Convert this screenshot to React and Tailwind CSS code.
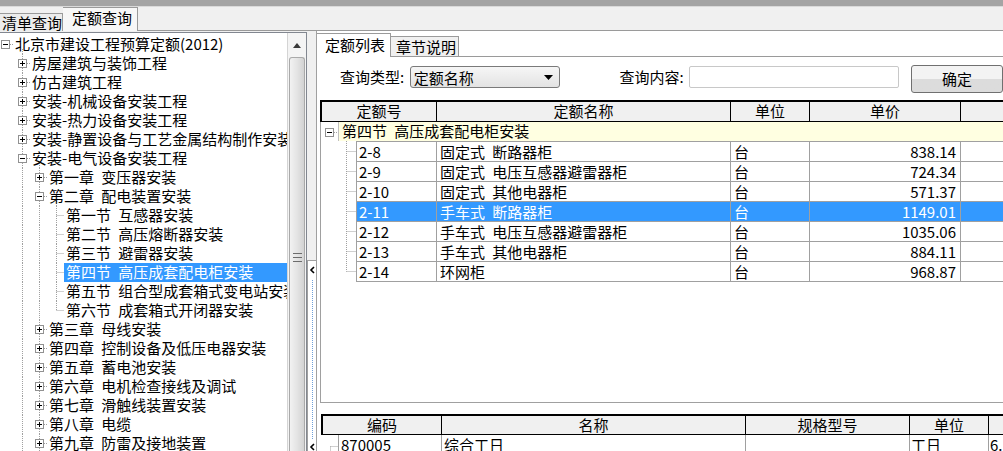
import React from 'react';

const dot = { stroke: '#a0a0a0', strokeWidth: 1, strokeDasharray: '1 1' };

const treeRows = [
  { level: 0, kind: 'minus', expanded: true, anc: [], text: '北京市建设工程预算定额(2012)' },
  { level: 1, kind: 'plus', anc: [], text: '房屋建筑与装饰工程' },
  { level: 1, kind: 'plus', anc: [], text: '仿古建筑工程' },
  { level: 1, kind: 'plus', anc: [], text: '安装-机械设备安装工程' },
  { level: 1, kind: 'plus', anc: [], text: '安装-热力设备安装工程' },
  { level: 1, kind: 'plus', anc: [], text: '安装-静置设备与工艺金属结构制作安装工程' },
  { level: 1, kind: 'minus', expanded: true, anc: [], text: '安装-电气设备安装工程' },
  { level: 2, kind: 'plus', anc: [1], text: '第一章 变压器安装' },
  { level: 2, kind: 'minus', expanded: true, anc: [1], text: '第二章 配电装置安装' },
  { level: 3, kind: 'leaf', anc: [1, 2], text: '第一节 互感器安装' },
  { level: 3, kind: 'leaf', anc: [1, 2], text: '第二节 高压熔断器安装' },
  { level: 3, kind: 'leaf', anc: [1, 2], text: '第三节 避雷器安装' },
  { level: 3, kind: 'leaf', anc: [1, 2], text: '第四节 高压成套配电柜安装', selected: true },
  { level: 3, kind: 'leaf', anc: [1, 2], text: '第五节 组合型成套箱式变电站安装' },
  { level: 3, kind: 'leaf', anc: [1, 2], last: true, text: '第六节 成套箱式开闭器安装' },
  { level: 2, kind: 'plus', anc: [1], text: '第三章 母线安装' },
  { level: 2, kind: 'plus', anc: [1], text: '第四章 控制设备及低压电器安装' },
  { level: 2, kind: 'plus', anc: [1], text: '第五章 蓄电池安装' },
  { level: 2, kind: 'plus', anc: [1], text: '第六章 电机检查接线及调试' },
  { level: 2, kind: 'plus', anc: [1], text: '第七章 滑触线装置安装' },
  { level: 2, kind: 'plus', anc: [1], text: '第八章 电缆' },
  { level: 2, kind: 'plus', anc: [1], text: '第九章 防雷及接地装置' },
];

const quotaRows = [
  { code: '2-8', name: '固定式 断路器柜', unit: '台', price: '838.14' },
  { code: '2-9', name: '固定式 电压互感器避雷器柜', unit: '台', price: '724.34' },
  { code: '2-10', name: '固定式 其他电器柜', unit: '台', price: '571.37' },
  { code: '2-11', name: '手车式 断路器柜', unit: '台', price: '1149.01', selected: true },
  { code: '2-12', name: '手车式 电压互感器避雷器柜', unit: '台', price: '1035.06' },
  { code: '2-13', name: '手车式 其他电器柜', unit: '台', price: '884.11' },
  { code: '2-14', name: '环网柜', unit: '台', price: '968.87', last: true },
];

function Box({ x, y, plus }) {
  return (
    <g>
      <rect x={x} y={y} width={8} height={8} fill="#fff" stroke="#919191" />
      <line x1={x + 1.5} y1={y + 4} x2={x + 6.5} y2={y + 4} stroke="#000" />
      {plus && <line x1={x + 4} y1={y + 1.5} x2={x + 4} y2={y + 6.5} stroke="#000" />}
    </g>
  );
}

function TreeGutter({ level, kind, last, expanded, anc }) {
  const w = 17 * level + 13;
  const cx = 17 * level + 5.5;
  return (
    <svg width={w} height={19} className="shrink-0 overflow-visible">
      {anc.map((k) => (
        <line key={k} x1={17 * k + 5.5} y1={0} x2={17 * k + 5.5} y2={19} {...dot} />
      ))}
      {level > 0 && <line x1={cx} y1={0} x2={cx} y2={last ? 9.5 : 19} {...dot} />}
      {expanded && <line x1={cx + 17} y1={14} x2={cx + 17} y2={19} {...dot} />}
      <line x1={kind === 'leaf' ? cx : cx + 4.5} y1={9.5} x2={w} y2={9.5} {...dot} />
      {kind !== 'leaf' && <Box x={cx - 4} y={5.5} plus={kind === 'plus'} />}
    </svg>
  );
}

function Chevron() {
  return (
    <svg width="7" height="8" className="shrink-0">
      <polyline points="5,1 2,4 5,7" fill="none" stroke="#000" strokeWidth="1.6" />
    </svg>
  );
}

export default function App() {
  return (
    <div className="w-[1003px] h-[451px] overflow-hidden bg-[#f0f0f0] flex flex-col font-['Noto_Sans_CJK_SC',sans-serif] text-[15px] text-black leading-none [word-spacing:4px]">
      <div className="h-[7px] shrink-0 bg-[#a4a4a4] border-b border-[#dadada]" />

      {/* top tab strip */}
      <div className="h-[24px] shrink-0 flex items-end border-b border-[#9a9a9a]">
        <div className="h-[18px] w-[63px] pl-[2px] border-t border-r border-[#9a9a9a] bg-[#ececec] leading-[17px] -mb-px">
          清单查询
        </div>
        <div className="h-[24px] w-[75px] pl-[9px] border-t border-r border-[#9a9a9a] bg-[#f7f7f7] leading-[20px] -mb-px">
          定额查询
        </div>
      </div>

      <div className="flex flex-1 min-h-0">
        {/* left tree panel */}
        <div className="w-[307px] shrink-0 pt-[1px] flex flex-col">
          <div className="flex flex-1 min-h-0 bg-white border-t border-r border-[#828790]">
            <div className="flex-1 overflow-hidden pt-[2px]">
              {treeRows.map((r, i) => (
                <div key={i} className="flex h-[19px] whitespace-nowrap">
                  <TreeGutter {...r} />
                  <span
                    className={`h-[19px] leading-[17px] pl-[2px] pr-[2px] ${
                      r.selected ? 'flex-1 bg-[#3399ff] text-white' : ''
                    }`}
                  >
                    {r.text}
                  </span>
                </div>
              ))}
            </div>
            {/* scrollbar */}
            <div className="w-[19px] shrink-0 flex flex-col bg-[#f4f4f4] border-l border-[#d4d4d4]">
              <div className="h-[24px] shrink-0 flex items-center justify-center">
                <svg width="8" height="5">
                  <polygon points="0,5 4,0 8,5" fill="#3a3a3a" />
                </svg>
              </div>
              <div className="flex-1 mx-px rounded-t-[3px] border border-b-0 border-[#a9a9a9] bg-gradient-to-r from-[#f2f2f2] via-[#e4e4e4] to-[#d3d3d3] flex flex-col items-center pt-[195px] gap-[3px]">
                <div className="w-[9px] h-px bg-[#6c6c6c]" />
                <div className="w-[9px] h-px bg-[#6c6c6c]" />
                <div className="w-[9px] h-px bg-[#6c6c6c]" />
              </div>
            </div>
          </div>
        </div>

        {/* splitter */}
        <div className="w-[9px] shrink-0 flex flex-col">
          <div className="h-[229px] shrink-0" />
          <div className="flex-1 flex flex-col items-center bg-white border-l border-t border-[#a0a0a0] pt-[5px]">
            <Chevron />
            <div className="flex-1 mt-[6px] mb-[4px] border-l border-dotted border-[#6f9fd8]" />
            <Chevron />
          </div>
        </div>

        {/* right panel */}
        <div className="flex-1 min-w-0 flex flex-col bg-white border-l border-[#a0a0a0] overflow-hidden">
          <div className="h-[26px] shrink-0 flex items-end border-b border-[#9a9a9a]">
            <div className="h-[24px] w-[74px] pl-[8px] bg-white border-t border-r border-[#9a9a9a] leading-[21px] -mb-px">
              定额列表
            </div>
            <div className="h-[20px] w-[68px] pl-[5px] bg-[#f0f0f0] border-t border-r border-[#9a9a9a] leading-[19px]">
              章节说明
            </div>
          </div>

          {/* query bar */}
          <div className="h-[43px] shrink-0 flex items-start pl-[23px] whitespace-nowrap">
            <div className="w-[70px] mt-[9px] h-[22px] leading-[21px]">查询类型:</div>
            <div className="mt-[9px] w-[150px] h-[22px] flex items-center justify-between pl-[3px] pr-[6px] rounded-[3px] border border-[#7a7a7a] bg-gradient-to-b from-[#f6f6f6] to-[#e3e3e3]">
              <span className="leading-[19px]">定额名称</span>
              <svg width="9" height="5">
                <polygon points="0,0 9,0 4.5,5" fill="#000" />
              </svg>
            </div>
            <div className="ml-[60px] w-[70px] mt-[9px] h-[22px] leading-[21px]">查询内容:</div>
            <div className="mt-[9px] w-[210px] h-[22px] rounded-[2px] border border-[#c8c8c8] bg-white" />
            <div className="ml-[12px] mt-[8px] w-[92px] h-[28px] shrink-0 flex items-center justify-center pb-[2px] rounded-[3px] border border-[#707070] bg-gradient-to-b from-[#f3f3f3] from-50% to-[#dcdcdc] to-50%">
              确定
            </div>
          </div>

          {/* quota grid */}
          <div className="ml-[3px] h-[303px] shrink-0 flex flex-col border-l border-b border-[#a0a0a0]">
            <div className="-ml-px h-[22px] shrink-0 flex bg-[#f0f0f0] border-t-2 border-b border-black text-center leading-[18px]">
              <div className="w-[117px] shrink-0 border-l-2 border-r border-black">定额号</div>
              <div className="w-[294px] shrink-0 border-r border-black">定额名称</div>
              <div className="w-[79px] shrink-0 border-r border-black">单位</div>
              <div className="w-[151px] shrink-0 border-r border-black">单价</div>
              <div className="flex-1" />
            </div>

            <div className="h-[19px] shrink-0 flex">
              <svg width="17" height="19" className="shrink-0">
                <line x1="13" y1="10.5" x2="17" y2="10.5" {...dot} />
                <Box x={4.5} y={6.5} plus={false} />
              </svg>
              <div className="flex-1 bg-[#ffffe1] border-l border-[#c0c0c0] pl-[3px] leading-[18px] whitespace-nowrap">
                第四节 高压成套配电柜安装
              </div>
            </div>

            {quotaRows.map((r) => (
              <div key={r.code} className="flex shrink-0">
                <svg width="35" height="20" className="shrink-0">
                  <line x1="25.5" y1="0" x2="25.5" y2={r.last ? 10.5 : 20} {...dot} />
                  <line x1="25.5" y1="10.5" x2="35" y2="10.5" {...dot} />
                </svg>
                <div
                  className={`flex flex-1 border-t border-l border-[#a0a0a0] leading-[19px] whitespace-nowrap ${
                    r.last ? 'h-[21px] border-b' : 'h-[20px]'
                  } ${r.selected ? 'bg-[#3399ff] text-white' : ''}`}
                >
                  <div className="w-[80px] shrink-0 pl-[2px] border-r border-[#a0a0a0]">{r.code}</div>
                  <div className="w-[294px] shrink-0 pl-[3px] border-r border-[#a0a0a0]">{r.name}</div>
                  <div className="w-[79px] shrink-0 pl-[3px] border-r border-[#a0a0a0]">{r.unit}</div>
                  <div className="w-[151px] shrink-0 pr-[4px] text-right border-r border-[#a0a0a0]">{r.price}</div>
                  <div className="flex-1" />
                </div>
              </div>
            ))}
            <div className="flex-1" />
          </div>

          <div className="h-[11px] shrink-0" />

          {/* resource grid */}
          <div className="ml-[4px] flex flex-col">
            <div className="h-[21px] shrink-0 flex bg-[#f0f0f0] border-t-2 border-b border-black text-center leading-[18px]">
              <div className="w-[121px] shrink-0 border-l-2 border-r border-black">编码</div>
              <div className="w-[304px] shrink-0 border-r border-black">名称</div>
              <div className="w-[164px] shrink-0 border-r border-black">规格型号</div>
              <div className="w-[79px] shrink-0 border-r border-black">单位</div>
              <div className="flex-1" />
            </div>
            <div className="h-[20px] flex leading-[19px] whitespace-nowrap">
              <svg width="17" height="20" className="shrink-0">
                <line x1="9.5" y1="11.5" x2="17" y2="11.5" {...dot} />
                <line x1="9.5" y1="11.5" x2="9.5" y2="20" {...dot} />
              </svg>
              <div className="w-[104px] shrink-0 pl-[2px] border-l border-r border-[#a0a0a0]">870005</div>
              <div className="w-[304px] shrink-0 pl-[2px] border-r border-[#a0a0a0]">综合工日</div>
              <div className="w-[164px] shrink-0 border-r border-[#a0a0a0]" />
              <div className="w-[79px] shrink-0 pl-[1px] border-r border-[#a0a0a0]">工日</div>
              <div className="flex-1 pl-[1px]">6.</div>
            </div>
          </div>
        </div>
      </div>
    </div>
  );
}
